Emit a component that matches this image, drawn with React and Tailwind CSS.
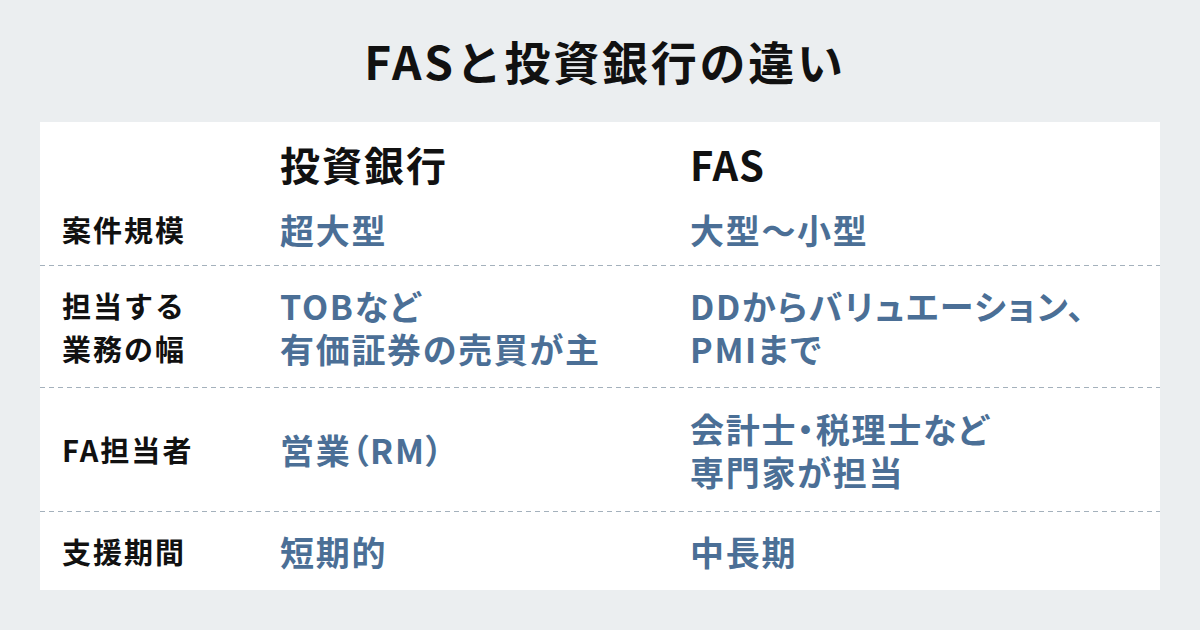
const FONT = "font-['Noto_Sans_CJK_JP','Noto_Sans',sans-serif]";
const DASH = 'h-px w-full bg-[linear-gradient(to_right,#a4b1bc_5px,transparent_5px)] bg-[length:9px_1px] bg-repeat-x';

const ROWS = [
  { label: ['案件規模'], bank: ['超大型'], fas: ['大型〜小型'], h: 'h-[59px] pb-[13px]' },
  { label: ['担当する', '業務の幅'], bank: ['TOBなど', '有価証券の売買が主'], fas: ['DDからバリュエーション、', 'PMIまで'], h: 'h-[121px]' },
  { label: ['FA担当者'], bank: ['営業（RM）'], fas: ['会計士・税理士など', '専門家が担当'], h: 'h-[123px]' },
  { label: ['支援期間'], bank: ['短期的'], fas: ['中長期'], h: 'h-[78px]' },
];

function Lines({ lines, className }) {
  return (
    <div className={className}>
      {lines.map(l => <div key={l}>{l}</div>)}
    </div>
  );
}

export default function App() {
  return (
    <div className={`${FONT} w-[1200px] h-[630px] bg-[#ebeef0] flex flex-col items-center`}>
      <h1 className="mt-[37px] ml-[10px] text-[46px] leading-none font-bold text-[#111] tracking-[0.06em]">
        FASと投資銀行の違い
      </h1>
      <div className="mt-[39px] w-[1120px] h-[468px] bg-white flex flex-col">
        <div className="h-[84px] flex items-center text-[40px] font-bold text-[#111] tracking-[0.05em] leading-none">
          <div className="w-[240px]" />
          <div className="w-[410px]">投資銀行</div>
          <div className="flex-1 tracking-[0.02em]">FAS</div>
        </div>
        {ROWS.map((r, i) => (
          <div key={i}>
            {i > 0 && <div className={DASH} />}
            <div className={`${r.h} flex items-center`}>
              <Lines
                lines={r.label}
                className="w-[240px] pl-[22px] text-[29px] leading-[43px] font-bold text-[#111] tracking-[0.07em]"
              />
              <Lines
                lines={r.bank}
                className="w-[410px] text-[34px] leading-[43px] font-bold text-[#4b6f96] tracking-[0.05em] [font-feature-settings:'palt']"
              />
              <Lines
                lines={r.fas}
                className="flex-1 text-[34px] leading-[43px] font-bold text-[#4b6f96] tracking-[0.05em] [font-feature-settings:'palt']"
              />
            </div>
          </div>
        ))}
      </div>
    </div>
  );
}
